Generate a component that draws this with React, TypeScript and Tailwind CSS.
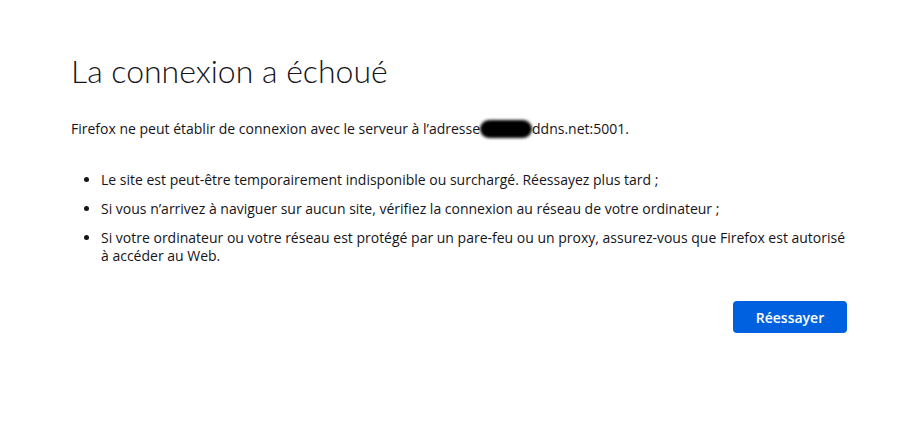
import React from "react";

export default function App() {
  return (
    <div className="min-h-screen w-full bg-white text-[#15141a]" style={{ fontFamily: "'Open Sans', 'Noto Sans', sans-serif" }}>
      <div className="pl-[71px] pr-[56px] pt-[49px]">
        <h1 className="text-[32px] font-light leading-[44px] text-[#15141a]" style={{ fontFamily: "Lato, sans-serif" }}>
          La connexion a échoué
        </h1>

        <p className="mt-[23px] text-[14px] leading-[18px]">
          Firefox ne peut établir de connexion avec le serveur à l’adresse
          <span className="inline-block h-[18px] w-[52px] translate-y-[4px] rounded-full bg-black blur-[1.5px]" />
          ddns.net:5001.
        </p>

        <ul className="mt-[33px] list-disc pl-[30px] text-[14px] leading-[18px]">
          <li className="mb-[11px]">Le site est peut-être temporairement indisponible ou surchargé. Réessayez plus tard ;</li>
          <li className="mb-[11px]">Si vous n’arrivez à naviguer sur aucun site, vérifiez la connexion au réseau de votre ordinateur ;</li>
          <li>
            Si votre ordinateur ou votre réseau est protégé par un pare-feu ou un proxy, assurez-vous que Firefox est autorisé à accéder au Web.
          </li>
        </ul>

        <div className="mt-[36px] flex justify-end pr-[6px]">
          <button className="h-[32px] w-[114px] rounded-[4px] bg-[#0061e0] text-[14px] font-semibold text-white">Réessayer</button>
        </div>
      </div>
    </div>
  );
}
